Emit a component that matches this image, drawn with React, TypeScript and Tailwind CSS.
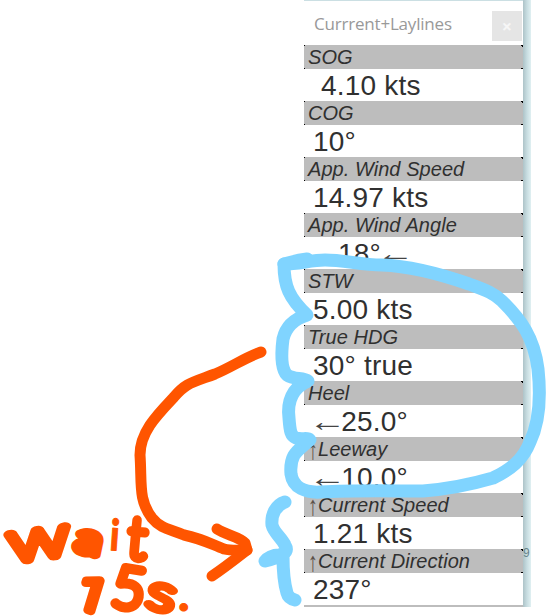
const rows = [
  { label: "SOG", value: "4.10 kts", pad: "pl-[17px]" },
  { label: "COG", value: "10°", pad: "pl-[9px]" },
  { label: "App. Wind Speed", value: "14.97 kts", pad: "pl-[9px]" },
  { label: "App. Wind Angle", value: "18°", right: true, pad: "pl-[34px]" },
  { label: "STW", value: "5.00 kts", pad: "pl-[9px]" },
  { label: "True HDG", value: "30° true", pad: "pl-[9px]" },
  { label: "Heel", value: "25.0°", left: true, pad: "pl-[9px]" },
  { label: "Leeway", up: true, value: "10.0°", left: true, pad: "pl-[9px]" },
  { label: "Current Speed", up: true, value: "1.21 kts", pad: "pl-[9px]" },
  { label: "Current Direction", up: true, value: "237°", pad: "pl-[9px]" },
];

const thin = "font-['Lato',sans-serif] font-thin";
const roboto = "font-['Roboto',sans-serif] font-light";
const heavy = "font-['Lato',sans-serif] font-black";

const letters = [
  { c: "w", x: 11, y: 562, size: 56, turn: -8, sx: 1.45, font: thin, pen: 9 },
  { c: "a", x: 74, y: 550, size: 40, turn: 12, sx: 1.35, font: thin, pen: 9.5 },
  { c: "i", x: 109, y: 550, size: 43, turn: 4, sx: 0.85, font: heavy, pen: 1 },
  { c: "t", x: 127, y: 557, size: 56, turn: 5, sx: 0.95, font: thin, pen: 9.5 },
  { c: "1", x: 74, y: 606, size: 45, turn: 17, sx: 1.15, font: roboto, pen: 8 },
  { c: "5", x: 110, y: 605, size: 56, turn: 9, sx: 1, font: thin, pen: 9.5 },
  { c: "s", x: 145, y: 606, size: 48, turn: 14, sx: 1.35, font: thin, pen: 8.5 },
  { c: ".", x: 178, y: 611, size: 48, turn: 0, sx: 1, font: heavy, pen: 1 },
];

function Corners() {
  return (
    <>
      <i className="absolute left-0 top-0 size-px bg-black" />
      <i className="absolute right-0 top-0 h-px w-[2px] bg-black" />
      <i className="absolute right-0 top-px size-px bg-black" />
      <i className="absolute bottom-0 left-0 size-px bg-black" />
      <i className="absolute bottom-0 right-0 h-px w-[2px] bg-black" />
    </>
  );
}

function Arrow() {
  return <span className="inline-block origin-center scale-x-[1.36] text-[#444]">←</span>;
}

function Annotations() {
  return (
    <svg className="pointer-events-none absolute inset-0" width="549" height="616" viewBox="0 0 549 616" fill="none">
      <g stroke="#80d4ff" strokeWidth="13" strokeLinecap="round" strokeLinejoin="round">
        <path d="M307 259 C299 260 291 262 284 264 C299 264 311 260 325 260 C344 260 361 265 382 265 C410 266 446 276 469 284 C485 290 494 293 502 301 C521 320 534 337 538 369 C541 397 540 421 530 442 C523 460 510 470 493 478 C469 485 448 489 423 491 C393 491 355 490 321 492 C306 493 293 488 291 474 C289 451 302 449 309 440" />
        <path d="M284 264 C284 286 289 298 307 315 C294 319 286 326 283 339 C281 355 281 369 287 375 C294 380 303 377 308 381 C292 388 287 402 289 418 C290 432 291 436 296 438 C303 440 307 437 310 440" />
        <path d="M285 502 C276 505 271 514 272 525 C274 533 281 537 285 545 C288 550 286 554 279 555 C273 555 267 558 265 561 C273 560 278 556 283 556 C283 569 284 583 287 593 C288 597 291 599 295 600" />
      </g>
      <g stroke="#ff5500" strokeWidth="11" strokeLinecap="round" strokeLinejoin="round">
        <path d="M261 352 C244 358 232 367 215 374 C191 383 186 383 174 397 C157 415 140 432 140 455 C142 483 138 500 152 518 C161 529 170 529 184 535 C203 539 213 545 224 549 C232 551 240 550 247 550" />
        <path d="M217 529 C226 535 240 537 245 543 L247 550 C238 557 224 568 212 576" />
      </g>
      <g fill="#ff5500" stroke="#ff5500" strokeLinecap="round" strokeLinejoin="round">
        {letters.map((l) => (
          <text key={l.c} className={l.font} fontSize={l.size} strokeWidth={l.pen} transform={`translate(${l.x} ${l.y}) rotate(${l.turn}) scale(${l.sx} 1)`}>
            {l.c}
          </text>
        ))}
      </g>
    </svg>
  );
}

export default function App() {
  return (
    <main className="relative h-[616px] w-[549px] overflow-hidden bg-white font-['Liberation_Sans',sans-serif] text-[#303030]">
      <div className="ml-[304px] flex h-[607px] w-[227px]">
        <section className="w-[219px] border-t border-[#cbdfe3] bg-white">
          <header className="flex h-11 justify-between pl-[10px] pr-px pt-[10px]">
            <h1 className="-mt-px whitespace-nowrap font-['Open_Sans',sans-serif] text-[17px] leading-[27px] tracking-[-0.2px] text-[#999]">Currrent+Laylines</h1>
            <button className="flex size-[30px] shrink-0 items-center justify-center bg-[#e5e5e5] font-['Open_Sans',sans-serif] text-[18px] font-bold text-[#f6f6f6]">×</button>
          </header>
          {rows.map((row) => (
            <div key={row.label}>
              <div className="relative flex h-6 items-center whitespace-nowrap bg-[#bdbdbd] pl-1 text-[20px] leading-6 tracking-[0.05px]">
                <Corners />
                {row.up && <span className="w-[10px] scale-y-[1.36] text-[#5b5048]">↑</span>}
                <span className="italic">{row.label}</span>
              </div>
              <div className={`h-8 whitespace-nowrap pt-px text-[28px] leading-8 tracking-[0.2px] ${row.pad}`}>
                {row.left && <Arrow />}
                {row.value}
                {row.right && <Arrow />}
              </div>
            </div>
          ))}
          <div className="h-[2px] bg-[#bdbdbd]" />
        </section>
        <aside className="w-2 bg-gradient-to-r from-[#adc3c8] via-[#c8dde1] to-[#e0f0f2] pt-[545px] text-[12px] leading-4 text-[#69858b]">9</aside>
      </div>
      <Annotations />
    </main>
  );
}
